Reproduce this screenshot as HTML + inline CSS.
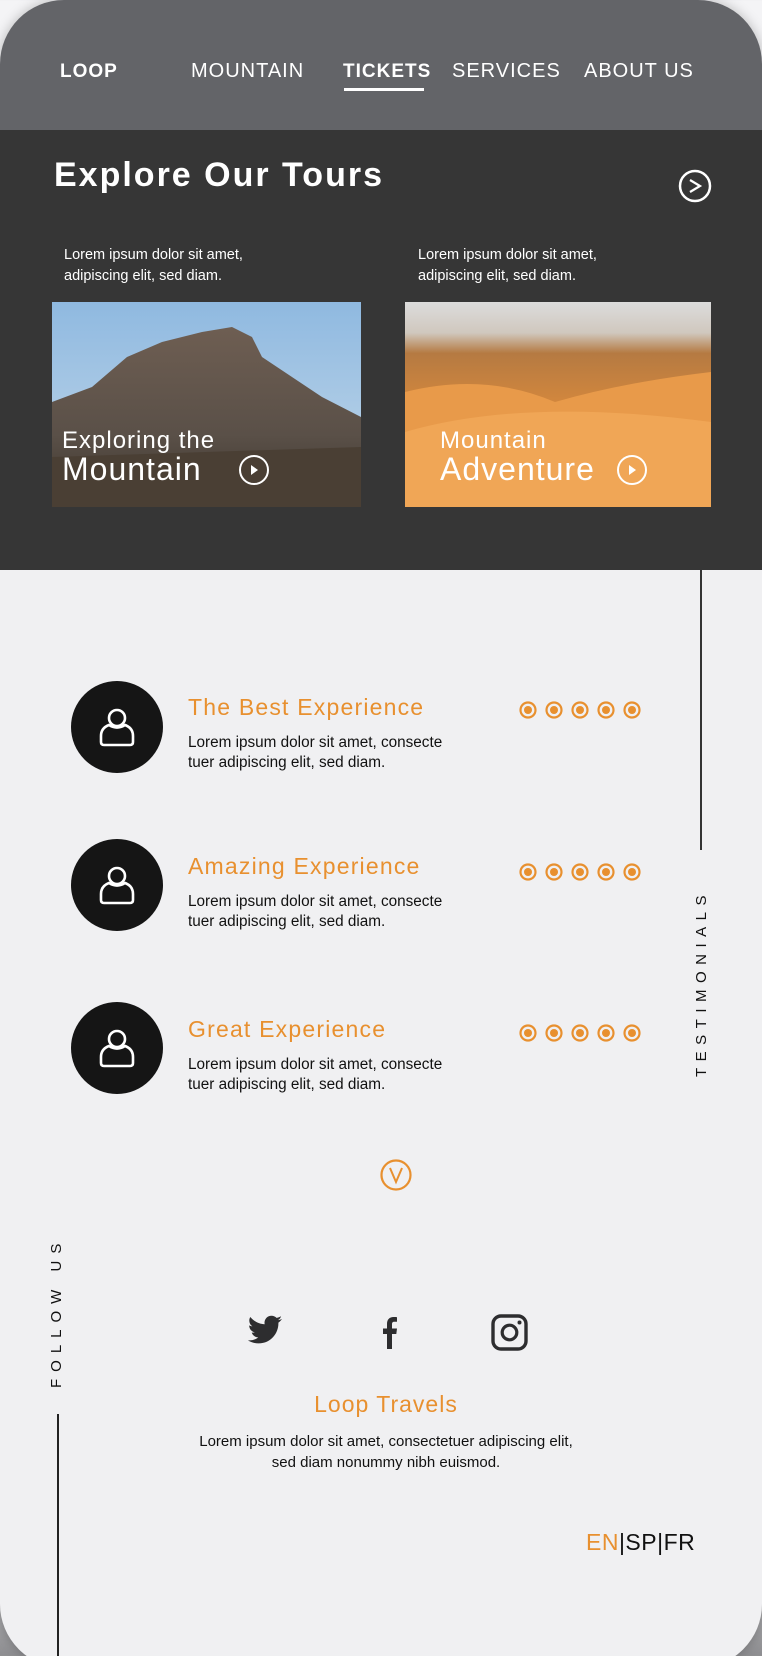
<!DOCTYPE html>
<html><head><meta charset="utf-8"><style>
*{margin:0;padding:0;box-sizing:border-box}
html,body{width:762px;height:1656px;overflow:hidden}
body{background:linear-gradient(#f4f4f6 0,#f4f4f6 1500px,#8d8d90 1656px);font-family:"Liberation Sans",sans-serif;position:relative}
.card{position:absolute;left:0;top:0;width:762px;height:1668px;border-radius:64px;overflow:hidden;background:#f0f0f2;box-shadow:0 0 12px rgba(0,0,0,.25)}
.hdr{position:absolute;left:0;top:0;width:762px;height:130px;background:#636468}
.nav{position:absolute;top:60px;color:#fff;font-size:20px;letter-spacing:1px}
.dark{position:absolute;left:0;top:130px;width:762px;height:440px;background:#363636}
.a{position:absolute}
.t{color:#fff}
.sm{font-size:14.5px;line-height:21px;color:#fff}
.row .tt{position:absolute;left:188px;color:#e8902f;font-size:23px;letter-spacing:1.2px}
.row .tx{position:absolute;left:188px;font-size:15.3px;line-height:20px;color:#111}
.av{position:absolute;left:71px;width:92px;height:92px;border-radius:50%;background:#151515}
.o{color:#e8902f}
</style></head><body>
<div class="card">
 <div class="hdr"></div>
 <div class="nav" style="left:60px;font-weight:bold;font-size:19px;top:61px">LOOP</div>
 <div class="nav" style="left:191px">MOUNTAIN</div>
 <div class="nav" style="left:343px;font-weight:bold;font-size:19px;top:61px">TICKETS</div>
 <div class="a" style="left:344px;top:88px;width:80px;height:3px;background:#fff"></div>
 <div class="nav" style="left:452px">SERVICES</div>
 <div class="nav" style="left:584px">ABOUT US</div>

 <div class="dark"></div>
 <div class="a t" style="left:54px;top:156px;font-size:34px;font-weight:bold;letter-spacing:2px">Explore Our Tours</div>
 <svg class="a" style="left:678px;top:169px" width="34" height="34" viewBox="0 0 34 34"><circle cx="17" cy="17" r="15" fill="none" stroke="#fff" stroke-width="2.5"/><path d="M12 11l10 6-10 6" fill="none" stroke="#fff" stroke-width="2.2"/></svg>
 <div class="a sm" style="left:64px;top:245px">Lorem ipsum dolor sit amet,<br>adipiscing elit, sed diam.</div>
 <div class="a sm" style="left:418px;top:245px">Lorem ipsum dolor sit amet,<br>adipiscing elit, sed diam.</div>

 <svg class="a" style="left:52px;top:302px" width="309" height="205" viewBox="0 0 309 205">
  <defs><linearGradient id="sk" x1="0" y1="0" x2="0" y2="1"><stop offset="0" stop-color="#8fb9e0"/><stop offset="1" stop-color="#c4d9ea"/></linearGradient>
  <linearGradient id="mt" x1="0" y1="0" x2="0" y2="1"><stop offset="0" stop-color="#6e5e52"/><stop offset=".6" stop-color="#5a5048"/><stop offset="1" stop-color="#3d352c"/></linearGradient></defs>
  <rect width="309" height="205" fill="url(#sk)"/>
  <path d="M0 100 L40 85 L75 55 L110 40 L130 35 L150 30 L180 25 L200 35 L210 55 L240 75 L270 95 L309 115 L309 205 L0 205Z" fill="url(#mt)"/>
  <path d="M0 155 L309 145 L309 205 L0 205Z" fill="#4a3f34"/>
 </svg>
 <div class="a t" style="left:62px;top:427px;font-size:24px;letter-spacing:1px">Exploring the</div>
 <div class="a t" style="left:62px;top:451px;font-size:32px;letter-spacing:1px">Mountain</div>
 <svg class="a" style="left:238px;top:454px" width="32" height="32"><circle cx="16" cy="16" r="14" fill="none" stroke="#fff" stroke-width="2"/><path d="M13 11l7 5-7 5z" fill="#fff"/></svg>

 <svg class="a" style="left:405px;top:302px" width="306" height="205" viewBox="0 0 306 205">
  <defs><linearGradient id="ds" x1="0" y1="0" x2="0" y2="1"><stop offset="0" stop-color="#dcdcdc"/><stop offset=".15" stop-color="#d0c8be"/><stop offset=".25" stop-color="#b57a42"/><stop offset=".55" stop-color="#d98a3c"/><stop offset="1" stop-color="#eea450"/></linearGradient></defs>
  <rect width="306" height="205" fill="url(#ds)"/>
  <path d="M0 90 Q80 70 150 100 Q220 80 306 70 L306 205 L0 205Z" fill="#e89a4a"/>
  <path d="M0 130 Q120 95 306 120 L306 205 L0 205Z" fill="#f0a656"/>
 </svg>
 <div class="a t" style="left:440px;top:427px;font-size:24px;letter-spacing:1px">Mountain</div>
 <div class="a t" style="left:440px;top:451px;font-size:32px;letter-spacing:1px">Adventure</div>
 <svg class="a" style="left:616px;top:454px" width="32" height="32"><circle cx="16" cy="16" r="14" fill="none" stroke="#fff" stroke-width="2"/><path d="M13 11l7 5-7 5z" fill="#fff"/></svg>

 <div class="a" style="left:700px;top:570px;width:2px;height:280px;background:#333"></div>
 <div class="a" style="left:693px;top:1077px;transform-origin:0 0;transform:rotate(-90deg);font-size:15px;letter-spacing:6.5px;color:#111;white-space:nowrap">TESTIMONIALS</div>

 <div class="row">
  <div class="av" style="top:681px"></div>
  <div class="tt" style="top:694px">The Best Experience</div>
  <div class="tx" style="top:733px">Lorem ipsum dolor sit amet, consecte<br>tuer adipiscing elit, sed diam.</div>
  <div class="av" style="top:839px"></div>
  <div class="tt" style="top:853px">Amazing Experience</div>
  <div class="tx" style="top:892px">Lorem ipsum dolor sit amet, consecte<br>tuer adipiscing elit, sed diam.</div>
  <div class="av" style="top:1002px"></div>
  <div class="tt" style="top:1016px">Great Experience</div>
  <div class="tx" style="top:1055px">Lorem ipsum dolor sit amet, consecte<br>tuer adipiscing elit, sed diam.</div>
 </div>
 <svg class="a" style="left:0;top:0" width="762" height="1656">
  <defs>
   <g id="u" fill="none" stroke="#fff" stroke-width="2.6"><circle cx="0" cy="-10" r="8"/><path d="M-8 -3 Q-16 0 -16 8 L-16 14 Q-16 17 -13 17 L13 17 Q16 17 16 14 L16 8 Q16 0 8 -3 Q0 2 -8 -3Z"/></g>
   <g id="d"><circle cx="0" cy="0" r="7.5" fill="none" stroke="#e8902f" stroke-width="2.2"/><circle cx="0" cy="0" r="4" fill="#e8902f"/></g>
  </defs>
  <use href="#u" x="117" y="728"/><use href="#u" x="117" y="886"/><use href="#u" x="117" y="1049"/>
  <g><use href="#d" x="528" y="710"/><use href="#d" x="554" y="710"/><use href="#d" x="580" y="710"/><use href="#d" x="606" y="710"/><use href="#d" x="632" y="710"/></g>
  <g><use href="#d" x="528" y="872"/><use href="#d" x="554" y="872"/><use href="#d" x="580" y="872"/><use href="#d" x="606" y="872"/><use href="#d" x="632" y="872"/></g>
  <g><use href="#d" x="528" y="1033"/><use href="#d" x="554" y="1033"/><use href="#d" x="580" y="1033"/><use href="#d" x="606" y="1033"/><use href="#d" x="632" y="1033"/></g>
  <circle cx="396" cy="1175" r="14.5" fill="none" stroke="#e8902f" stroke-width="2.2"/>
  <path d="M390 1168 L396 1182 L402 1168" fill="none" stroke="#e8902f" stroke-width="2"/>
  <path fill="#2d2d2f" d="M282 1319c-1.3.6-2.6 1-4 1.1 1.5-.9 2.6-2.3 3.1-3.9-1.4.8-2.9 1.4-4.5 1.7-1.3-1.4-3.1-2.2-5.1-2.2-3.9 0-7 3.1-7 7 0 .6.1 1.1.2 1.6-5.8-.3-11-3.1-14.4-7.3-.6 1-1 2.2-1 3.5 0 2.4 1.2 4.6 3.1 5.8-1.1 0-2.200-.4-3.2-.9v.1c0 3.4 2.4 6.2 5.6 6.9-.6.2-1.2.2-1.8.2-.5 0-.9 0-1.3-.1.9 2.8 3.5 4.8 6.5 4.9-2.4 1.9-5.4 3-8.7 3-.6 0-1.1 0-1.7-.1 3.1 2 6.8 3.1 10.7 3.1 12.9 0 19.9-10.7 19.9-19.9v-.9c1.4-1 2.6-2.2 3.6-3.6z"/>
  <path fill="#2d2d2f" d="M387 1349v-15h-4v-5.5h4v-4.5c0-4.5 2.5-7 6.5-7 1.5 0 3 .1 3.5.2v4.5h-2.5c-2 0-2.5 1-2.5 2.5v4.3h5l-.7 5.5h-4.3v15z"/>
  <rect x="493" y="1316" width="33" height="33" rx="8" fill="none" stroke="#2d2d2f" stroke-width="3.4"/>
  <circle cx="509.5" cy="1332.5" r="7.3" fill="none" stroke="#2d2d2f" stroke-width="3.2"/>
  <circle cx="519.5" cy="1322.5" r="2" fill="#2d2d2f"/>
 </svg>
 <div class="a" style="left:48px;top:1388px;transform-origin:0 0;transform:rotate(-90deg);font-size:15px;letter-spacing:7px;color:#111;white-space:nowrap">FOLLOW US</div>
 <div class="a" style="left:57px;top:1414px;width:2px;height:260px;background:#222"></div>
 <div class="a o" style="left:0;width:772px;text-align:center;top:1391px;font-size:23px;letter-spacing:1px">Loop Travels</div>
 <div class="a" style="left:0;width:772px;text-align:center;top:1431px;font-size:15px;line-height:21px;color:#111">Lorem ipsum dolor sit amet, consectetuer adipiscing elit,<br>sed diam nonummy nibh euismod.</div>
 <div class="a" style="left:586px;top:1529px;font-size:23px;color:#111;letter-spacing:.5px"><span class="o">EN</span>|SP|FR</div>
</div>
</body></html>
